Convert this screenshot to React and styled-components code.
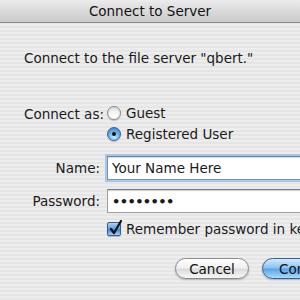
import * as React from 'react'
import styled, { createGlobalStyle } from 'styled-components'

const GlobalStyle = createGlobalStyle`
  html, body {
    margin: 0;
    padding: 0;
    width: 300px;
    height: 300px;
    overflow: hidden;
  }
  body {
    font-family: "Lucida Grande", "DejaVu Sans", "Liberation Sans", sans-serif;
    color: #1a1a1a;
  }
`

const Sheet = styled.div`
  width: 300px;
  height: 300px;
  overflow: hidden;
  display: flex;
  flex-direction: column;
  background: repeating-linear-gradient(
    to bottom,
    #ededed 0px,
    #ededed 2px,
    #e5e5e5 2px,
    #e5e5e5 4px
  );
`

const TitleBar = styled.div`
  height: 22px;
  flex: none;
  display: flex;
  align-items: center;
  justify-content: center;
  background: linear-gradient(to bottom, #ececec 0%, #dadada 50%, #cbcbcb 100%);
  border-bottom: 1px solid #8a8a8a;
  font-size: 13.5px;
  color: #111;
`

const Body = styled.div`
  flex: 1;
  padding: 27px 0 0 24px;
  display: flex;
  flex-direction: column;
`

const Message = styled.div`
  font-size: 13.5px;
  height: 16px;
  line-height: 16px;
  white-space: nowrap;
`

const Form = styled.div`
  margin-top: 40px;
  display: grid;
  grid-template-columns: 76px 1fr;
  column-gap: 7px;
  align-items: center;
`

const Label = styled.div`
  font-size: 13.5px;
  text-align: right;
  white-space: nowrap;
  align-self: ${(p) => (p.top ? 'start' : 'center')};
`

const RadioGroup = styled.div`
  display: flex;
  flex-direction: column;
  gap: 7px;
`

const Option = styled.div`
  display: flex;
  align-items: center;
  gap: 5px;
  font-size: 13.5px;
  height: 14px;
  white-space: nowrap;
`

const Radio = styled.span`
  width: 14px;
  height: 14px;
  border-radius: 50%;
  flex: none;
  box-sizing: border-box;
  display: flex;
  align-items: center;
  justify-content: center;
  border: 1px solid ${(p) => (p.checked ? '#3d5f8f' : '#8a8a8a')};
  background: ${(p) =>
    p.checked
      ? 'radial-gradient(circle at 50% 75%, #c9ecff 0%, #6fb4ea 45%, #2e78c8 100%)'
      : 'radial-gradient(circle at 50% 80%, #ffffff 0%, #f2f2f2 50%, #c8c8c8 100%)'};
  box-shadow: 0 1px 1px rgba(0, 0, 0, 0.2);

  &::after {
    content: '';
    display: ${(p) => (p.checked ? 'block' : 'none')};
    width: 4px;
    height: 4px;
    border-radius: 50%;
    background: #111;
  }
`

const Spacer = styled.div`
  height: ${(p) => p.h}px;
  grid-column: 1 / span 2;
`

const Field = styled.div`
  width: 240px;
  height: 24px;
  box-sizing: border-box;
  background: #fff;
  border: 1px solid ${(p) => (p.focused ? '#6f95c4' : '#a0a0a0')};
  border-top-color: ${(p) => (p.focused ? '#5a84bb' : '#7a7a7a')};
  box-shadow: ${(p) =>
    p.focused
      ? '0 0 0 2px #a9c6e8, inset 0 1px 1px rgba(0,0,0,0.15)'
      : 'inset 0 1px 1px rgba(0,0,0,0.2)'};
  padding: 0 4px;
  display: flex;
  align-items: center;
  font-size: 13.5px;
  white-space: nowrap;
`

const Dots = styled.span`
  font-size: 13px;
  font-weight: bold;
  letter-spacing: -0.6px;
`

const Check = styled.span`
  width: 14px;
  height: 14px;
  flex: none;
  box-sizing: border-box;
  border: 1px solid #3d5f8f;
  border-radius: 2px;
  background: linear-gradient(to bottom, #a9d3f7 0%, #5aa1e3 50%, #3f86d6 55%, #9dd0fa 100%);
  box-shadow: 0 1px 1px rgba(0, 0, 0, 0.25);
  position: relative;
`

const CheckMark = styled.svg`
  position: absolute;
  left: 1px;
  top: -3px;
`

const Buttons = styled.div`
  margin-top: 22px;
  padding-left: 151px;
  display: flex;
  gap: 13px;
`

const Button = styled.div`
  flex: none;
  width: ${(p) => p.w}px;
  height: 21px;
  box-sizing: border-box;
  border-radius: 11px;
  display: flex;
  align-items: center;
  justify-content: center;
  font-size: 13.5px;
  color: #111;
  border: 1px solid ${(p) => (p.primary ? '#3a5e93' : '#8a8a8a')};
  background: ${(p) =>
    p.primary
      ? 'linear-gradient(to bottom, #d2ecff 0%, #8cc4f2 45%, #5ea6e8 55%, #a8dbff 100%)'
      : 'linear-gradient(to bottom, #ffffff 0%, #f1f1f1 45%, #dcdcdc 55%, #f6f6f6 100%)'};
  box-shadow: 0 1px 2px rgba(0, 0, 0, 0.25);
  white-space: nowrap;
`

export default function App() {
  return (
    <>
      <GlobalStyle />
      <Sheet>
        <TitleBar>Connect to Server</TitleBar>
        <Body>
          <Message>Connect to the file server "qbert."</Message>
          <Form>
            <Label top>Connect as:</Label>
            <RadioGroup>
              <Option>
                <Radio />
                Guest
              </Option>
              <Option>
                <Radio checked />
                Registered User
              </Option>
            </RadioGroup>
            <Spacer h={15} />
            <Label>Name:</Label>
            <Field focused>Your Name Here</Field>
            <Spacer h={9} />
            <Label>Password:</Label>
            <Field>
              <Dots>••••••••</Dots>
            </Field>
            <Spacer h={9} />
            <div />
            <Option>
              <Check>
                <CheckMark width="14" height="16" viewBox="0 0 14 16">
                  <path
                    d="M2 9 L5 13 L12 1"
                    fill="none"
                    stroke="#111"
                    strokeWidth="2.2"
                    strokeLinecap="round"
                    strokeLinejoin="round"
                  />
                </CheckMark>
              </Check>
              Remember password in keychain
            </Option>
          </Form>
          <Buttons>
            <Button w={74}>Cancel</Button>
            <Button w={90} primary>
              Connect
            </Button>
          </Buttons>
        </Body>
      </Sheet>
    </>
  )
}
